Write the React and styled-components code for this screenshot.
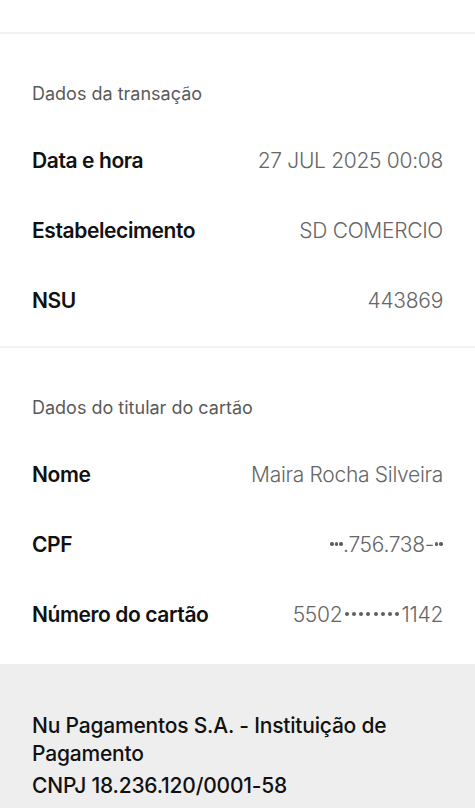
import styled, { createGlobalStyle } from 'styled-components';

const GlobalStyle = createGlobalStyle`
  html, body {
    margin: 0;
    padding: 0;
    background: #ffffff;
  }
  body {
    font-family: Inter, "Noto Sans", "Liberation Sans", sans-serif;
    -webkit-font-smoothing: antialiased;
  }
`;

const Page = styled.div`
  width: 475px;
  min-height: 808px;
  display: flex;
  flex-direction: column;
  background: #ffffff;
`;

const TopSpacer = styled.div`
  height: 32px;
  border-bottom: 2px solid #f2f2f2;
`;

const Section = styled.section`
  padding: 48px 32px ${p => p.$bottom}px;
  border-bottom: ${p => (p.$divider ? '2px solid #f2f2f2' : 'none')};
`;

const Heading = styled.h2`
  margin: 0 0 19px;
  height: 24px;
  line-height: 24px;
  font-size: 18px;
  font-weight: 400;
  color: #5a5a5a;
  letter-spacing: 0;
`;

const Row = styled.div`
  height: 70px;
  display: flex;
  align-items: center;
  justify-content: space-between;
`;

const Label = styled.span`
  font-size: 21px;
  font-weight: 600;
  color: #111111;
  letter-spacing: -0.4px;
`;

const Value = styled.span`
  font-size: 21px;
  font-weight: 300;
  color: #666666;
  letter-spacing: -0.3px;
`;

const Mask = styled.span`
  display: inline-block;
  margin: 0 ${p => p.$edge}px;
`;

const Dot = styled.span`
  display: inline-block;
  width: ${p => p.$size}px;
  height: ${p => p.$size}px;
  border-radius: 50%;
  background: #5e5e5e;
  vertical-align: 5.5px;
  margin-right: ${p => p.$gap}px;
  &:last-child {
    margin-right: 0;
  }
`;

const Dots = ({ n, size, gap, edge }) => (
  <Mask $edge={edge}>
    {Array.from({ length: n }, (_, i) => (
      <Dot key={i} $size={size} $gap={gap} />
    ))}
  </Mask>
);

const Footer = styled.footer`
  flex: 1;
  background: #eeeeee;
  padding: 48px 32px 20px;
`;

const FooterText = styled.p`
  margin: ${p => (p.$gap ? '4px' : '0')} 0 0;
  font-size: 21px;
  line-height: 28px;
  font-weight: 500;
  color: #111111;
  letter-spacing: -0.2px;
`;

const transacao = [
  ['Data e hora', '27 JUL 2025 00:08'],
  ['Estabelecimento', 'SD COMERCIO'],
  ['NSU', '443869'],
];

const titular = [
  ['Nome', 'Maira Rocha Silveira'],
  [
    'CPF',
    <>
      <Dots n={3} size={3.6} gap={0.8} edge={0.5} />.756.738-<Dots n={2} size={3.6} gap={0.8} edge={0.5} />
    </>,
  ],
  [
    'Número do cartão',
    <>
      5502<Dots n={8} size={4} gap={3.2} edge={2.5} />1142
    </>,
  ],
];

function InfoSection({ title, rows, divider, bottom }) {
  return (
    <Section $divider={divider} $bottom={bottom}>
      <Heading>{title}</Heading>
      {rows.map(([label, value]) => (
        <Row key={label}>
          <Label>{label}</Label>
          <Value>{value}</Value>
        </Row>
      ))}
    </Section>
  );
}

export default function App() {
  return (
    <>
      <GlobalStyle />
      <Page>
        <TopSpacer />
        <InfoSection title="Dados da transação" rows={transacao} divider bottom={11} />
        <InfoSection title="Dados do titular do cartão" rows={titular} bottom={15} />
        <Footer>
          <FooterText>Nu Pagamentos S.A. - Instituição de Pagamento</FooterText>
          <FooterText $gap>CNPJ 18.236.120/0001-58</FooterText>
        </Footer>
      </Page>
    </>
  );
}
